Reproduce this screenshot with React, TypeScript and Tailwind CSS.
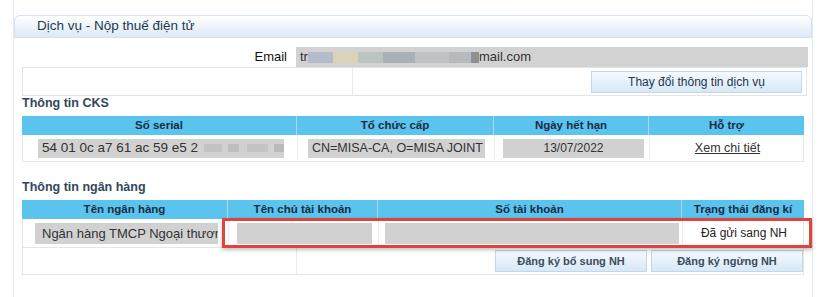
import React from "react";

const cksCols = "grid-cols-[274px_197px_155px_156px]";
const bankCols = "grid-cols-[205px_150px_304px_123px]";

function HeadCell({ children, first }: { children: React.ReactNode; first?: boolean }) {
  return (
    <div
      className={`h-[19px] text-center text-[11.5px] font-bold leading-[19px] text-[#1b2c42] ${
        first ? "" : "border-l border-[#a9dcf4]"
      }`}
    >
      {children}
    </div>
  );
}

function GrayBox({ className, children }: { className: string; children?: React.ReactNode }) {
  return (
    <div
      className={`overflow-hidden whitespace-nowrap bg-[#d1d1d1] text-[#333] ${className}`}
    >
      {children}
    </div>
  );
}

function BlueButton({ className, children }: { className: string; children: React.ReactNode }) {
  return (
    <button
      type="button"
      className={`h-[22px] border border-[#c3d7ea] bg-gradient-to-b from-[#f5fafe] to-[#d7e8f7] text-center ${className}`}
    >
      {children}
    </button>
  );
}

export default function App() {
  return (
    <div className="h-[297px] w-[832px] overflow-hidden bg-white font-['Liberation_Sans',Arial,sans-serif] text-[13px] text-[#222]">
      <div className="ml-[13px] h-full w-[800px] border-x border-[#e1e8ef] pt-[15px]">
        {/* Panel title */}
        <div className="flex h-[23px] items-center rounded-t-[6px] border border-[#d6e3ef] bg-gradient-to-b from-white to-[#dce9f5] pl-[22px] text-[13.5px] text-[#233950]">
          Dịch vụ - Nộp thuế điện tử
        </div>

        <div className="pl-[8px]">
          {/* Email row */}
          <div className="mt-[9px] flex h-[20px]">
            <div className="w-[265px] text-right leading-[20px] text-[#111]">Email</div>
            <div className="ml-[9px] flex w-[512px] items-center bg-[#d2d2d2] pl-[4px] text-[#333]">
              <span>tr</span>
              <span className="h-[11px] w-[25px] bg-[#b4bccb]" />
              <span className="h-[11px] w-[25px] bg-[#d9d3b8]" />
              <span className="h-[11px] w-[25px] bg-[#bcc4c0]" />
              <span className="h-[11px] w-[32px] bg-[#a9b1b4]" />
              <span className="h-[11px] w-[34px] bg-[#bfc3c6]" />
              <span className="h-[11px] w-[22px] bg-[#b6babd]" />
              <span className="h-[11px] w-[8px] bg-[#8e9194]" />
              <span>mail.com</span>
            </div>
          </div>

          {/* Service row */}
          <div className="grid h-[29px] w-[785px] grid-cols-[330px_1fr] border border-[#e4e4e4]">
            <div className="border-r border-[#e8e8e8]" />
            <div className="flex items-center justify-end pr-[4px]">
              <BlueButton className="w-[211px] text-[12px] text-[#1f3550]">
                Thay đổi thông tin dịch vụ
              </BlueButton>
            </div>
          </div>

          {/* CKS */}
          <div className="h-[20px] text-[12.5px] font-bold leading-[14px] text-[#33475c]">
            Thông tin CKS
          </div>
          <div className="w-[782px]">
            <div className={`grid ${cksCols} bg-[#5ac3ee]`}>
              <HeadCell first>Số serial</HeadCell>
              <HeadCell>Tổ chức cấp</HeadCell>
              <HeadCell>Ngày hết hạn</HeadCell>
              <HeadCell>Hỗ trợ</HeadCell>
            </div>
            <div className={`grid h-[27px] ${cksCols} border-x border-b border-[#e6e6e6]`}>
              <div className="flex items-center pl-[15px]">
                <GrayBox className="flex h-[19px] w-[246px] items-center pl-[4px] text-[13.5px]">
                  <span>54 01 0c a7 61 ac 59 e5 2</span>
                  <span className="ml-[6px] h-[8px] w-[18px] bg-[#c2c2c2]" />
                  <span className="ml-[6px] h-[8px] w-[12px] bg-[#bdbdbd]" />
                  <span className="ml-[8px] h-[8px] w-[22px] bg-[#c4c4c4]" />
                  <span className="ml-[6px] h-[8px] w-[10px] bg-[#bababa]" />
                </GrayBox>
              </div>
              <div className="flex items-center border-l border-[#ececec] pl-[10px]">
                <GrayBox className="h-[19px] w-[177px] pl-[4px] text-[12.5px] leading-[19px]">
                  CN=MISA-CA, O=MISA JOINT STOCK COMPANY
                </GrayBox>
              </div>
              <div className="flex items-center border-l border-[#ececec] pl-[8px]">
                <GrayBox className="h-[19px] w-[141px] text-center text-[12px] leading-[19px]">
                  13/07/2022
                </GrayBox>
              </div>
              <div className="flex items-center justify-center border-l border-[#ececec] text-[12.5px] text-[#333] underline">
                Xem chi tiết
              </div>
            </div>
          </div>

          {/* Bank */}
          <div className="flex h-[38px] items-end pb-[6px] text-[12.5px] font-bold leading-[14px] text-[#33475c]">
            Thông tin ngân hàng
          </div>
          <div className="relative w-[782px]">
            <div className={`grid ${bankCols} bg-[#5ac3ee]`}>
              <HeadCell first>Tên ngân hàng</HeadCell>
              <HeadCell>Tên chủ tài khoản</HeadCell>
              <HeadCell>Số tài khoản</HeadCell>
              <HeadCell>Trạng thái đăng kí</HeadCell>
            </div>
            <div className={`grid h-[29px] ${bankCols} border-x border-b border-[#e6e6e6]`}>
              <div className="flex items-center pl-[12px]">
                <GrayBox className="h-[21px] w-[183px] pl-[7px] text-[13px] leading-[21px]">
                  Ngân hàng TMCP Ngoại thương Việt Nam
                </GrayBox>
              </div>
              <div className="flex items-center border-l border-[#ececec] pl-[8px]">
                <GrayBox className="h-[21px] w-[135px]" />
              </div>
              <div className="flex items-center border-l border-[#ececec] pl-[6px]">
                <GrayBox className="h-[21px] w-[294px]" />
              </div>
              <div className="flex items-center justify-center border-l border-[#ececec] text-[12px] text-[#222]">
                Đã gửi sang NH
              </div>
            </div>
            <div className="grid h-[27px] grid-cols-[274px_1fr] border-x border-b border-[#e6e6e6]">
              <div className="border-r border-[#ececec]" />
              <div className="flex items-center justify-end gap-[4px]">
                <BlueButton className="w-[152px] text-[11px] font-bold text-[#3b4d62]">
                  Đăng ký bổ sung NH
                </BlueButton>
                <BlueButton className="w-[152px] text-[11px] font-bold text-[#3b4d62]">
                  Đăng ký ngừng NH
                </BlueButton>
              </div>
            </div>

            {/* highlight marker */}
            <div className="absolute left-[200px] top-[18px] h-[30px] w-[590px] border-[3px] border-[#e2423c] shadow-[0_2px_4px_rgba(0,0,0,0.25)]" />
          </div>
        </div>
      </div>
    </div>
  );
}
